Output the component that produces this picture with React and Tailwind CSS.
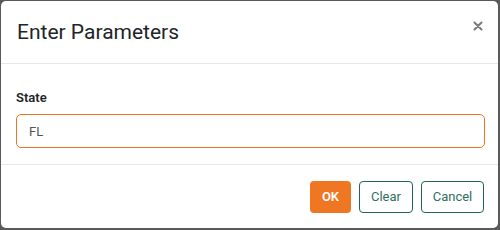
import React, { useState } from 'react';

const App = () => {
  const [state, setState] = useState('FL');

  return (
    <div className="w-[500px] h-[230px] bg-[#5a5a5a] pt-px pl-px pr-[2px] pb-[2px] font-['Roboto',_'Liberation_Sans',_sans-serif]">
      <div className="h-full bg-white rounded-[5px] flex flex-col">
        {/* header */}
        <div className="h-[63px] flex items-center justify-between pl-4 pr-[15px] border-b border-[#e4e7eb]">
          <h2 className="text-[21px] leading-none text-[#212529] font-normal">Enter Parameters</h2>
          <button type="button" className="text-[#7a7a7a] -mt-[12px]">
            <svg width="10" height="10" viewBox="0 0 10 10">
              <path d="M1.5 1.5L8.5 8.5M8.5 1.5L1.5 8.5" stroke="currentColor" strokeWidth="2" strokeLinecap="round" />
            </svg>
          </button>
        </div>

        {/* body */}
        <div className="flex-1 pt-6 pb-4 pl-[15px] pr-[13px] border-b border-[#e4e7eb]">
          <label className="block text-[13px] leading-5 font-semibold text-[#212529] mb-[6px]">State</label>
          <input
            type="text"
            value={state}
            onChange={(e) => setState(e.target.value)}
            className="w-full h-[34px] border border-[#ee7623] rounded-[5px] px-[12px] text-[13px] text-[#555] outline-none"
          />
        </div>

        {/* footer */}
        <div className="h-[63px] flex items-center justify-end gap-2 pr-[14px]">
          <button className="h-[32px] w-[41px] rounded-[4px] bg-[#ef7622] text-white text-[13px] font-semibold">OK</button>
          <button className="h-[32px] w-[54px] rounded-[4px] border border-[#1f6658] text-[#2f6e63] text-[13px]">Clear</button>
          <button className="h-[32px] w-[63px] rounded-[4px] border border-[#1f6658] text-[#2f6e63] text-[13px]">Cancel</button>
        </div>
      </div>
    </div>
  );
};

export default App;
